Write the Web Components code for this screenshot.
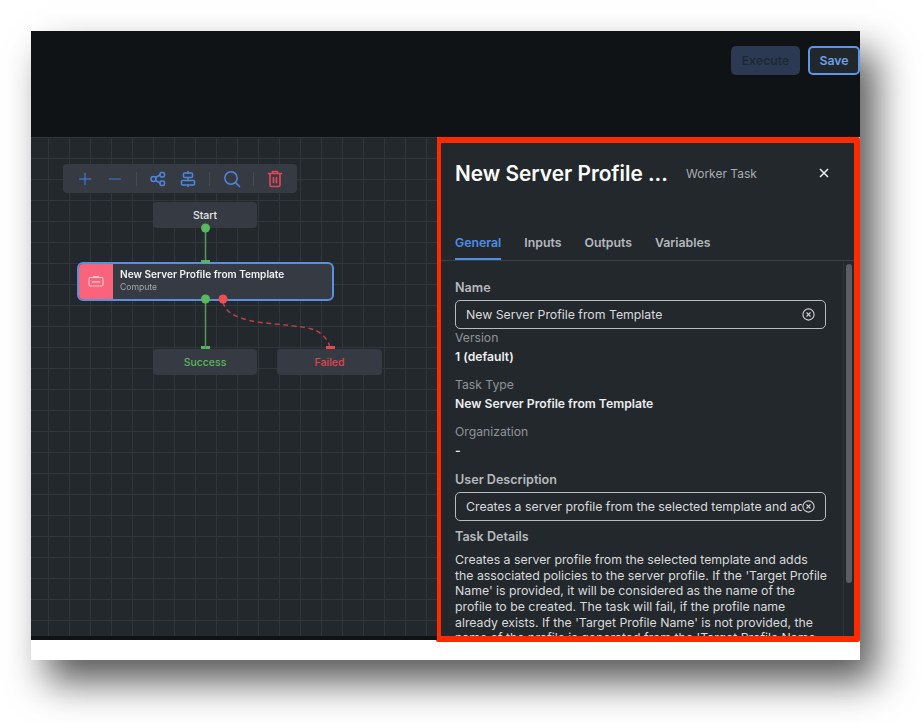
<!DOCTYPE html>
<html>
<head>
<meta charset="utf-8">
<title>Workflow designer</title>
<style>
  html, body { margin: 0; background: #fff; }
  html { height: 722px; overflow: hidden; }
  body { height: 722px; box-sizing: border-box; padding: 31px 0 0 31px; font-family: Inter, "Liberation Sans", sans-serif; }
</style>
</head>
<body>

<wf-screen>
  <wf-header slot="header"></wf-header>
  <wf-canvas slot="canvas">
    <wf-toolbar></wf-toolbar>
    <wf-node style="left:122px;top:65px;width:104px;height:26px">Start</wf-node>
    <wf-task style="left:46px;top:125px" name="New Server Profile from Template" group="Compute"></wf-task>
    <wf-node style="left:122px;top:212px;width:104px;height:26px;color:#5cb35f">Success</wf-node>
    <wf-node style="left:246px;top:212px;width:105px;height:26px;color:#e0474f">Failed</wf-node>
  </wf-canvas>
  <wf-panel slot="panel">
    <wf-field label="Name" strong><wf-input value="New Server Profile from Template"></wf-input></wf-field>
    <wf-field label="Version" value="1 (default)" style="margin-top:1px"></wf-field>
    <wf-field label="Task Type" value="New Server Profile from Template" style="margin-top:13px"></wf-field>
    <wf-field label="Organization" value="-" style="margin-top:13px"></wf-field>
    <wf-field label="User Description" strong style="margin-top:14px"><wf-input value="Creates a server profile from the selected template and adds the associated policies"></wf-input></wf-field>
    <wf-field label="Task Details" strong style="margin-top:8px" text>
      Creates a server profile from the selected template and adds the associated policies to the server profile. If the 'Target Profile Name' is provided, it will be considered as the name of the profile to be created. The task will fail, if the profile name already exists. If the 'Target Profile Name' is not provided, the name of the profile is generated from the 'Target Profile Name
    </wf-field>
  </wf-panel>
</wf-screen>

<script>

// outer frame of the screenshot, with its drop shadow
class WfScreen extends HTMLElement {
  constructor() {
    super();
    this.attachShadow({mode: 'open'}).innerHTML = `
      <style>
        :host {
          display: flex;
          flex-direction: column;
          width: 829px;
          height: 629px;
          background: #fff;
          box-shadow: 16px 22px 36px rgba(0,0,0,.65);
          filter: blur(.35px);
        }
        .work { display: flex; height: 503px; }
      </style>
      <slot name="header"></slot>
      <div class="work">
        <slot name="canvas"></slot>
        <slot name="panel"></slot>
      </div>`;
  }
}
customElements.define('wf-screen', WfScreen);

class WfHeader extends HTMLElement {
  constructor() {
    super();
    this.attachShadow({mode: 'open'}).innerHTML = `
      <style>
        :host {
          display: flex;
          justify-content: flex-end;
          align-items: flex-start;
          gap: 8px;
          box-sizing: border-box;
          height: 106px;
          padding-top: 15px;
          background: #0f1316;
        }
        button {
          box-sizing: border-box;
          height: 29px;
          border-radius: 5px;
          font: 600 12.300px Inter, sans-serif;
          padding: 0;
        }
        .exec { width: 69px; background: #2b3a52; border: 0; color: #1d2836; }
        .save { width: 52px; background: #22272c; border: 2px solid #5b96e8; color: #6aa0ea; }
      </style>
      <button class="exec">Execute</button>
      <button class="save">Save</button>`;
  }
}
customElements.define('wf-header', WfHeader);

// grid background, the edges and their dots sit on top of the nodes
class WfCanvas extends HTMLElement {
  constructor() {
    super();
    this.attachShadow({mode: 'open'}).innerHTML = `
      <style>
        :host {
          display: block;
          position: relative;
          box-sizing: border-box;
          width: 406px;
          height: 503px;
          overflow: hidden;
          border-bottom: 4px solid #0f1316;
          background-color: #23282c;
          background-image:
            linear-gradient(#30363b 1px, transparent 1px),
            linear-gradient(90deg, #30363b 1px, transparent 1px);
          background-size: 21px 21px;
          background-position: 17px 0;
        }
        svg { position: absolute; left: 0; top: 0; }
      </style>
      <slot></slot>
      <svg width="406" height="499" fill="none">
        <path d="M174.500 91V125" stroke="#4f9a55" stroke-width="1.500"/>
        <path d="M170 124.500h9M170 210.500h9" stroke="#5cb35f" stroke-width="3"/>
        <path d="M174.500 163V212" stroke="#4f9a55" stroke-width="1.500"/>
        <path d="M192 165C194 175 204 181 226 185C250 188 272 189 284 193C292 197 297 203 299 210" stroke="#b8404a" stroke-width="1.500" stroke-dasharray="5 3.500"/>
        <path d="M295 210.500h9" stroke="#e0474f" stroke-width="3"/>
        <circle cx="174.500" cy="91" r="4.500" fill="#5cb85f"/>
        <circle cx="174.500" cy="162" r="4.500" fill="#5cb85f"/>
        <circle cx="192" cy="162" r="4.500" fill="#ea4f55"/>
      </svg>`;
  }
}
customElements.define('wf-canvas', WfCanvas);

class WfToolbar extends HTMLElement {
  constructor() {
    super();
    this.attachShadow({mode: 'open'}).innerHTML = `
      <style>
        :host {
          position: absolute;
          left: 32px;
          top: 27px;
          display: flex;
          align-items: center;
          box-sizing: border-box;
          width: 234px;
          height: 29px;
          padding-left: 14px;
          border-radius: 4px;
          background: #363b43;
        }
        svg { display: block; fill: none; stroke: #4f86dc; stroke-width: 1.500; stroke-linecap: round; stroke-linejoin: round; }
        i { display: block; width: 1px; height: 14px; background: #454b53; }
      </style>
      <svg width="16" height="16" viewBox="0 0 16 16" style="margin-right:14px;stroke:#3f6fb8"><path d="M8 2.500v11M2.500 8h11"/></svg>
      <svg width="16" height="16" viewBox="0 0 16 16" style="margin-right:13px;stroke:#3b659f"><path d="M2.500 8h11"/></svg>
      <i style="margin-right:13px"></i>
      <svg width="16" height="16" viewBox="0 0 16 16" style="margin-right:14px"><circle cx="3.500" cy="8" r="2.500"/><rect x="10" y="1.500" width="4.500" height="4.500" rx="1.500"/><rect x="10" y="10" width="4.500" height="4.500" rx="1.500"/><path d="M5.500 6.500L10 4M5.500 9.500L10 12"/></svg>
      <svg width="16" height="16" viewBox="0 0 16 16" style="margin-right:13px"><rect x="3.500" y="2" width="9" height="4.500" rx="1"/><rect x="1.500" y="9.500" width="13" height="4.500" rx="1"/><path d="M8 .5v2M8 6.500v3M8 14v1.500"/></svg>
      <i style="margin-right:13px"></i>
      <svg width="18" height="18" viewBox="0 0 18 18" style="margin-right:12px"><circle cx="8" cy="8" r="6.200"/><path d="M12.600 12.600L16.500 16.500"/></svg>
      <i style="margin-right:13px"></i>
      <svg width="16" height="18" viewBox="0 0 16 18" style="stroke:#e0475a;stroke-width:1.700"><path d="M1.500 3.500h13M5.500 3V1.500h5V3M3 3.500V15a1.500 1.500 0 0 0 1.500 1.500h7A1.500 1.500 0 0 0 13 15V3.500M6.500 7.500v5M9.500 7.500v5"/></svg>`;
  }
}
customElements.define('wf-toolbar', WfToolbar);

class WfNode extends HTMLElement {
  constructor() {
    super();
    this.attachShadow({mode: 'open'}).innerHTML = `
      <style>
        :host {
          position: absolute;
          display: flex;
          align-items: center;
          justify-content: center;
          border-radius: 4px;
          background: #363a42;
          color: #e6e8ea;
          font: 500 10.500px Inter, sans-serif;
        }
      </style>
      <slot></slot>`;
  }
}
customElements.define('wf-node', WfNode);

class WfTask extends HTMLElement {
  constructor() {
    super();
    this.attachShadow({mode: 'open'}).innerHTML = `
      <style>
        :host {
          position: absolute;
          display: flex;
          box-sizing: border-box;
          width: 257px;
          height: 39px;
          border: 2px solid #5b8fe0;
          border-radius: 6px;
          overflow: hidden;
          background: #363a42;
        }
        .icon {
          display: flex;
          align-items: center;
          justify-content: center;
          width: 34px;
          background: #f9647c;
        }
        .text { padding: 4px 0 0 7px; }
        .name { font: 600 10.100px/13px Inter, sans-serif; color: #f2f3f4; white-space: nowrap; }
        .group { font: 400 8.600px/12px Inter, sans-serif; color: #a6aaaf; }
      </style>
      <div class="icon">
        <svg width="16" height="11" viewBox="0 0 16 11" fill="none" stroke="#ffc4cf" stroke-width="1.200"><rect x="1" y="1.500" width="14" height="8.500" rx="1.500"/><path d="M4 5.800h8M6 1.500V.6h4v.9"/></svg>
      </div>
      <div class="text">
        <div class="name"></div>
        <div class="group"></div>
      </div>`;
    this.shadowRoot.querySelector('.name').textContent = this.getAttribute('name') || '';
    this.shadowRoot.querySelector('.group').textContent = this.getAttribute('group') || '';
  }
}
customElements.define('wf-task', WfTask);

// the side panel, red frame is the annotation around it
class WfPanel extends HTMLElement {
  constructor() {
    super();
    this.attachShadow({mode: 'open'}).innerHTML = `
      <style>
        :host {
          display: flex;
          flex-direction: column;
          flex: none;
          box-sizing: border-box;
          width: 424px;
          height: 505px;
          margin-left: -1px;
          border: 6px solid #ff2a00;
          border-left-width: 5px;
          border-radius: 2px;
          background: #23282c;
          color: #f0f1f2;
          overflow: hidden;
        }
        .top { display: flex; align-items: center; height: 60px; padding: 0 0 0 14px; flex: none; }
        h1 { margin: 0; width: 214px; font: 600 20.800px Inter, sans-serif; color: #fff; white-space: nowrap; }
        .kind { margin-left: 17px; font: 400 12px Inter, sans-serif; color: #a9adb1; }
        .close { margin-left: auto; margin-right: 24px; display: block; }
        .tabs { display: flex; gap: 23px; height: 58px; box-sizing: border-box; padding: 0 0 0 14px; align-items: flex-end; border-bottom: 1px solid #3b4046; flex: none; }
        .tab { font: 600 12.300px Inter, sans-serif; color: #b4b8bc; padding-bottom: 8px; border-bottom: 2px solid transparent; }
        .tab.on { color: #4f8ee8; border-bottom-color: #4f8ee8; }
        .body { position: relative; flex: 1; min-height: 0; overflow: hidden; padding: 19px 28px 0 14px; }
        .bar { position: absolute; right: 2px; top: 3px; width: 6px; height: 319px; border-radius: 3px; background: #5a5e63; }
        .track { position: absolute; right: 0; top: 0; bottom: 0; width: 11px; border-left: 1px solid #2f3439; box-sizing: border-box; }
      </style>
      <div class="top">
        <h1>New Server Profile ...</h1>
        <span class="kind">Worker Task</span>
        <svg class="close" width="12" height="12" viewBox="0 0 12 12" stroke="#f0f1f2" stroke-width="1.500"><path d="M2 2l8 8M10 2l-8 8"/></svg>
      </div>
      <div class="tabs">
        <span class="tab on">General</span>
        <span class="tab">Inputs</span>
        <span class="tab">Outputs</span>
        <span class="tab">Variables</span>
      </div>
      <div class="body">
        <slot></slot>
        <div class="track"></div>
        <div class="bar"></div>
      </div>`;
  }
}
customElements.define('wf-panel', WfPanel);

class WfField extends HTMLElement {
  constructor() {
    super();
    this.attachShadow({mode: 'open'}).innerHTML = `
      <style>
        :host { display: block; font-family: Inter, sans-serif; }
        .label { font-size: 12.200px; line-height: 15px; color: #8f9499; }
        :host([strong]) .label { font-size: 12.600px; font-weight: 600; color: #b6babe; }
        .value { margin-top: 4px; font-size: 12.200px; line-height: 15px; font-weight: 600; color: #eceef0; }
        .value:empty { display: none; }
        .slot { display: block; margin-top: 5px; }
        :host([text]) .slot { margin-top: 8px; margin-right: -2px; font-size: 12.300px; line-height: 15.670px; color: #d9dbdd; }
      </style>
      <div class="label"></div>
      <div class="value"></div>
      <div class="slot"><slot></slot></div>`;
    this.shadowRoot.querySelector('.label').textContent = this.getAttribute('label') || '';
    this.shadowRoot.querySelector('.value').textContent = this.getAttribute('value') || '';
  }
}
customElements.define('wf-field', WfField);

class WfInput extends HTMLElement {
  constructor() {
    super();
    this.attachShadow({mode: 'open'}).innerHTML = `
      <style>
        :host {
          display: flex;
          align-items: center;
          box-sizing: border-box;
          height: 29px;
          padding: 0 10px;
          border: 1.500px solid #b9bcbf;
          border-radius: 5px;
        }
        span {
          flex: 1;
          min-width: 0;
          overflow: hidden;
          white-space: nowrap;
          font: 400 12.300px Inter, sans-serif;
          color: #d9dbdd;
        }
        svg { flex: none; display: block; }
      </style>
      <span></span>
      <svg width="13" height="13" viewBox="0 0 13 13" fill="none" stroke="#cfd2d4" stroke-width="1.100"><circle cx="6.500" cy="6.500" r="5.600"/><path d="M4.500 4.500l4 4M8.500 4.500l-4 4"/></svg>`;
    this.shadowRoot.querySelector('span').textContent = this.getAttribute('value') || '';
  }
}
customElements.define('wf-input', WfInput);

</script>
</body>
</html>
